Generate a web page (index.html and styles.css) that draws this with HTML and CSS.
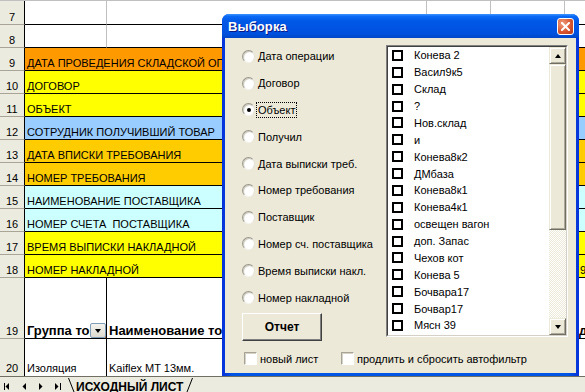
FILE: index.html
```html
<!DOCTYPE html>
<html>
<head>
<meta charset="utf-8">
<title>Выборка</title>
<link rel="stylesheet" href="styles.css">
</head>
<body>
<div class="app">
  <div class="sheet">
    <div class="row r7">
      <div class="rh">7</div>
      <div class="c ka"></div><div class="c kb"></div><div class="c kc"></div><div class="c kd"></div><div class="c ke"></div>
    </div>
    <div class="row">
      <div class="rh">8</div>
      <div class="c ka"></div><div class="c kb"></div><div class="c kc"></div><div class="c kd"></div><div class="c ke"></div>
    </div>
    <div class="row">
      <div class="rh">9</div>
      <div class="c fill orange">ДАТА ПРОВЕДЕНИЯ СКЛАДСКОЙ ОПЕРАЦИИ</div>
    </div>
    <div class="row">
      <div class="rh">10</div>
      <div class="c fill yellow">ДОГОВОР</div>
    </div>
    <div class="row">
      <div class="rh">11</div>
      <div class="c fill yellow">ОБЪЕКТ</div>
    </div>
    <div class="row">
      <div class="rh">12</div>
      <div class="c fill blue">СОТРУДНИК ПОЛУЧИВШИЙ ТОВАР</div>
    </div>
    <div class="row">
      <div class="rh">13</div>
      <div class="c fill gold">ДАТА ВПИСКИ ТРЕБОВАНИЯ</div>
    </div>
    <div class="row">
      <div class="rh">14</div>
      <div class="c fill gold">НОМЕР ТРЕБОВАНИЯ</div>
    </div>
    <div class="row">
      <div class="rh">15</div>
      <div class="c fill cyan">НАИМЕНОВАНИЕ ПОСТАВЩИКА</div>
    </div>
    <div class="row">
      <div class="rh">16</div>
      <div class="c fill cyan">НОМЕР СЧЕТА  ПОСТАВЩИКА</div>
    </div>
    <div class="row">
      <div class="rh">17</div>
      <div class="c fill yellow">ВРЕМЯ ВЫПИСКИ НАКЛАДНОЙ</div>
    </div>
    <div class="row">
      <div class="rh">18</div>
      <div class="c fill yellow span4">НОМЕР НАКЛАДНОЙ</div>
      <div class="c fill yellow tailnum">9</div>
    </div>
    <div class="row r19">
      <div class="rh">19</div>
      <div class="c ka bold hascombo">Группа товара<span class="combo"><span class="tri-down"></span></span></div>
      <div class="c kb bold">Наименование товара</div>
      <div class="c kc"></div>
      <div class="c kd"></div>
      <div class="c ke bold tailhead">д.</div>
    </div>
    <div class="row r20">
      <div class="rh">20</div>
      <div class="c ka">Изоляция</div>
      <div class="c kb">Kaiflex MT 13мм.</div>
      <div class="c kc"></div>
      <div class="c kd"></div>
      <div class="c ke"></div>
    </div>
  </div>

  <div class="tabbar">
    <svg class="nav" width="66" height="15" viewBox="0 0 66 15">
      <rect x="4" y="6" width="1" height="7" fill="#000"/>
      <polygon points="9,6 9,13 5.5,9.5" fill="#000"/>
      <polygon points="26,6 26,13 22.5,9.5" fill="#000"/>
      <polygon points="39,6 39,13 42.5,9.5" fill="#000"/>
      <polygon points="55,6 55,13 58.5,9.5" fill="#000"/>
      <rect x="60" y="6" width="1" height="7" fill="#000"/>
    </svg>
    <div class="tab">
      <svg class="slant" width="8" height="15" viewBox="0 0 8 15"><line x1="1.5" y1="1" x2="7" y2="15" stroke="#000" stroke-width="1"/></svg>
      <span class="tabtext">ИСХОДНЫЙ ЛИСТ</span>
      <svg class="slant" width="8" height="15" viewBox="0 0 8 15"><line x1="1" y1="15" x2="6.5" y2="1" stroke="#000" stroke-width="1"/></svg>
    </div>
  </div>

  <div class="dialog">
    <div class="titlebar">
      <span class="title">Выборка</span>
      <span class="close">
        <svg width="9" height="9" viewBox="0 0 9 9"><path d="M1 1 L8 8 M8 1 L1 8" stroke="#fff" stroke-width="2" stroke-linecap="square"/></svg>
      </span>
    </div>
    <div class="client">
      <div class="leftcol">
        <div class="radios">
          <div class="radio"><span class="rb"></span><span class="rl">Дата операции</span></div>
          <div class="radio"><span class="rb"></span><span class="rl">Договор</span></div>
          <div class="radio"><span class="rb on"></span><span class="rl focus">Объект</span></div>
          <div class="radio"><span class="rb"></span><span class="rl">Получил</span></div>
          <div class="radio"><span class="rb"></span><span class="rl">Дата выписки треб.</span></div>
          <div class="radio"><span class="rb"></span><span class="rl">Номер требования</span></div>
          <div class="radio"><span class="rb"></span><span class="rl">Поставщик</span></div>
          <div class="radio"><span class="rb"></span><span class="rl">Номер сч. поставщика</span></div>
          <div class="radio"><span class="rb"></span><span class="rl">Время выписки накл.</span></div>
          <div class="radio"><span class="rb"></span><span class="rl">Номер накладной</span></div>
        </div>
        <button class="btn">Отчет</button>
      </div>
      <div class="list">
        <div class="list-inner">
          <div class="items">
            <div class="item"><span class="sq"></span><span>Конева 2</span></div>
            <div class="item"><span class="sq"></span><span>Васил9к5</span></div>
            <div class="item"><span class="sq"></span><span>Склад</span></div>
            <div class="item"><span class="sq"></span><span>?</span></div>
            <div class="item"><span class="sq"></span><span>Нов.склад</span></div>
            <div class="item"><span class="sq"></span><span>и</span></div>
            <div class="item"><span class="sq"></span><span>Конева8к2</span></div>
            <div class="item"><span class="sq"></span><span>ДМбаза</span></div>
            <div class="item"><span class="sq"></span><span>Конева8к1</span></div>
            <div class="item"><span class="sq"></span><span>Конева4к1</span></div>
            <div class="item"><span class="sq"></span><span>освещен вагон</span></div>
            <div class="item"><span class="sq"></span><span>доп. Запас</span></div>
            <div class="item"><span class="sq"></span><span>Чехов кот</span></div>
            <div class="item"><span class="sq"></span><span>Конева 5</span></div>
            <div class="item"><span class="sq"></span><span>Бочвара17</span></div>
            <div class="item"><span class="sq"></span><span>Бочвар17</span></div>
            <div class="item"><span class="sq"></span><span>Мясн 39</span></div>
          </div>
          <div class="vscroll">
            <div class="sbtn"><span class="arr-up"></span></div>
            <div class="thumb"></div>
            <div class="track"></div>
            <div class="sbtn"><span class="arr-down"></span></div>
          </div>
        </div>
      </div>
      <div class="checks">
        <label class="chk first"><span class="chkbox"></span><span>новый лист</span></label>
        <label class="chk"><span class="chkbox"></span><span>продлить и сбросить автофильтр</span></label>
      </div>
    </div>
  </div>
</div>
</body>
</html>
```

FILE: styles.css
```css
html, body {
  margin: 0;
  padding: 0;
  background: #fff;
  overflow: hidden;
}

.app {
  position: relative;
  width: 585px;
  height: 392px;
  overflow: hidden;
  font-family: "Liberation Sans", Arial, sans-serif;
  font-size: 11px;
  color: #000;
}

/* ---------- sheet ---------- */
.sheet {
  border-top: 1px solid #c0c0c0;
}

.row {
  display: flex;
  height: 23px;
}

.row.r7 { height: 24px; }
.row.r19 { height: 61px; }
.row.r20 { height: 37px; }

.rh {
  width: 25px;
  flex: none;
  box-sizing: border-box;
  background: #ecebdf;
  border-right: 1px solid #000;
  border-bottom: 1px solid #a8a598;
  display: flex;
  align-items: flex-end;
  justify-content: center;
  line-height: 13px;
  font-size: 11px;
}

.r20 .rh { border-bottom: none; padding-bottom: 1px; }

.c {
  box-sizing: border-box;
  border-bottom: 1px solid #000;
  border-right: 1px solid #c0c0c0;
  display: flex;
  align-items: flex-end;
  padding: 0 2px;
  line-height: 13px;
  white-space: pre;
  overflow: hidden;
  flex: none;
}

.ka { width: 82px; }
.kb { width: 320px; }
.kc { width: 64px; }
.kd { width: 74px; }
.ke { flex: 1; border-right: none; }

.fill {
  flex: 1;
  border-right: none;
}

.span4 { flex: none; width: 540px; }
.tailnum { padding-left: 15px; }

.orange { background: #ff9900; }
.yellow { background: #ffff00; }
.blue { background: #99ccff; }
.gold { background: #ffcc00; }
.cyan { background: #ccffff; }

.r19 .c,
.r20 .c { border-right-color: #000; }
.r19 .ke, .r20 .ke { border-right: none; }
.r20 .c { border-bottom: none; padding-bottom: 1px; }

.bold {
  font-weight: bold;
  font-size: 13px;
  line-height: 15px;
}

.hascombo { position: relative; }

.combo {
  position: absolute;
  right: 0;
  bottom: 0;
  width: 16px;
  height: 15px;
  box-sizing: border-box;
  border: 1px solid #7f9db9;
  border-radius: 2px;
  background: linear-gradient(#f4f3ee, #dcdad0);
  display: flex;
  align-items: center;
  justify-content: center;
}

.tri-down {
  width: 0;
  height: 0;
  border-left: 3.5px solid transparent;
  border-right: 3.5px solid transparent;
  border-top: 4px solid #000;
}

.tailhead { padding-left: 14px; }

/* ---------- tab bar ---------- */
.tabbar {
  height: 16px;
  box-sizing: border-box;
  border-top: 1px solid #716f64;
  background: #ecebdf;
  display: flex;
  align-items: flex-start;
  overflow: hidden;
}

.nav { flex: none; display: block; }

.tab {
  display: flex;
  align-items: flex-start;
  margin-left: 1px;
}

.slant { display: block; }

.tabtext {
  font-weight: bold;
  font-size: 12px;
  line-height: 14px;
  padding-top: 3px;
  margin: 0 3px 0 1px;
}

/* ---------- dialog ---------- */
.dialog {
  position: absolute;
  left: 222px;
  top: 14px;
  width: 357px;
  height: 362px;
  box-sizing: border-box;
  border-radius: 7px 7px 0 0;
  background: linear-gradient(90deg, #0831d9, #0054e3 3%, #0054e3 97%, #0831d9);
  display: flex;
  flex-direction: column;
}

.titlebar {
  height: 24px;
  flex: none;
  border-radius: 7px 7px 0 0;
  background: linear-gradient(#3d95ff 0%, #0a6af5 10%, #0058e6 30%, #0054e3 60%, #0050dc 85%, #0046c6 100%);
  display: flex;
  align-items: center;
  justify-content: space-between;
  padding: 0 5px 0 6px;
}

.title {
  color: #fff;
  font-weight: bold;
  font-size: 13px;
  text-shadow: 1px 1px 0 #0a1883;
  letter-spacing: 0.1px;
}

.close {
  width: 17px;
  height: 17px;
  box-sizing: border-box;
  border: 1px solid #fff;
  border-radius: 3px;
  background: radial-gradient(circle at 30% 30%, #f0a080, #d8562f 55%, #b8381a);
  display: flex;
  align-items: center;
  justify-content: center;
}

.close svg { display: block; }

.client {
  flex: 1;
  margin: 0 3px 3px;
  background: #ece9d8;
  box-sizing: border-box;
  padding: 5px 8px 0 17px;
  display: grid;
  grid-template-columns: 144px 182px;
  grid-template-rows: 298px 13px;
  row-gap: 11px;
  align-items: start;
}

.leftcol {
  display: flex;
  flex-direction: column;
}

.radios {
  display: flex;
  flex-direction: column;
}

.radio {
  height: 26.8px;
  display: flex;
  align-items: center;
}

.rb {
  width: 13px;
  height: 13px;
  flex: none;
  box-sizing: border-box;
  border-radius: 50%;
  background: #fff;
  border: 1px solid;
  border-color: #9a988c #e4e2d8 #f4f3ee #9a988c;
  box-shadow: inset 1px 1px 1px #c8c5b8;
  position: relative;
}

.rb.on::after {
  content: "";
  position: absolute;
  left: 3.5px;
  top: 3.5px;
  width: 4px;
  height: 4px;
  border-radius: 50%;
  background: #000;
}

.rl {
  margin-left: 1px;
  border: 1px dotted transparent;
  padding: 0 1px;
  line-height: 14px;
  white-space: nowrap;
}

.rl.focus { border-color: #000; }

.btn {
  margin-top: 2px;
  width: 80px;
  height: 28px;
  padding: 0;
  background: #ece9d8;
  border: 1px solid;
  border-color: #fff #404040 #404040 #fff;
  box-shadow: inset -1px -1px 0 #808080;
  font-family: "Liberation Sans", Arial, sans-serif;
  font-weight: bold;
  font-size: 12px;
  color: #000;
}

.list {
  margin-top: 2px;
  width: 182px;
  height: 292px;
  box-sizing: border-box;
  border: 1px solid;
  border-color: #808080 #fff #fff #808080;
}

.list-inner {
  height: 100%;
  box-sizing: border-box;
  border: 1px solid;
  border-color: #404040 #d4d0c8 #d4d0c8 #404040;
  background: #fff;
  display: flex;
}

.items {
  flex: 1;
  display: flex;
  flex-direction: column;
}

.item {
  height: 16.875px;
  display: flex;
  align-items: center;
  white-space: nowrap;
}

.sq {
  width: 11px;
  height: 11px;
  box-sizing: border-box;
  border: 2px solid #000;
  margin: 0 11px 0 4px;
  flex: none;
}

.vscroll {
  width: 17px;
  flex: none;
  display: flex;
  flex-direction: column;
}

.sbtn, .thumb {
  box-sizing: border-box;
  background: #ece9d8;
  border: 1px solid;
  border-color: #ece9d8 #716f64 #716f64 #ece9d8;
  box-shadow: inset 1px 1px 0 #fff, inset -1px -1px 0 #aca899;
}

.sbtn {
  height: 17px;
  flex: none;
  display: flex;
  align-items: center;
  justify-content: center;
}

.thumb {
  height: 166px;
  flex: none;
}

.track {
  flex: 1;
  background: repeating-conic-gradient(#ffffff 0 25%, #ece9d8 0 50%) 0 0 / 2px 2px;
}

.arr-up {
  width: 0;
  height: 0;
  border-left: 3.5px solid transparent;
  border-right: 3.5px solid transparent;
  border-bottom: 4px solid #000;
}

.arr-down {
  width: 0;
  height: 0;
  border-left: 3.5px solid transparent;
  border-right: 3.5px solid transparent;
  border-top: 4px solid #000;
}

.checks {
  grid-column: 1 / 3;
  display: flex;
  align-items: center;
  height: 13px;
  padding-left: 2px;
}

.chk {
  display: flex;
  align-items: center;
  white-space: nowrap;
}

.chk.first { width: 97px; flex: none; }

.chkbox {
  width: 13px;
  height: 13px;
  box-sizing: border-box;
  flex: none;
  background: #fff;
  border: 1px solid;
  border-color: #a6a497 #fff #fff #a6a497;
  box-shadow: inset 1px 1px 0 #d6d3c6;
  margin-right: 3px;
}
```
